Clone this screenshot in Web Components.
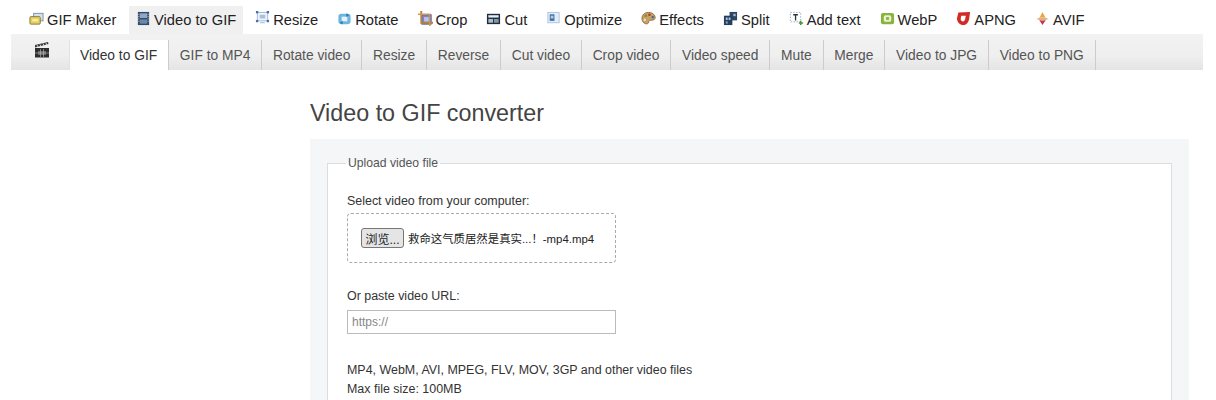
<!DOCTYPE html>
<html lang="en"><head><meta charset="utf-8"><title>Video to GIF converter</title>
<style>
html,body{margin:0;padding:0;background:#fff;height:400px;overflow:hidden}
body{font-family:"Liberation Sans",Arial,sans-serif;color:#333}
svg{display:block}
</style></head><body>
<template id="t-top"><style>
:host{display:flex;padding:6px 0 0 22px;height:34px;box-sizing:border-box;gap:5.05px;font-size:14.7px;color:#222}
</style><slot></slot></template>
<template id="t-item"><style>
:host{display:flex;align-items:center;height:28px;padding:0 7px;gap:3px;box-sizing:border-box;white-space:nowrap;padding-bottom:1px}
:host([active]){background:#f0f0f0;margin-left:.6px}
.i{width:15px;height:15px;display:block;margin-top:-3px}
</style><span class="i"><slot name="icon"></slot></span><slot></slot></template>
<template id="t-sub"><style>
:host{display:flex;margin:0 13px 0 11px;height:36px;background:linear-gradient(#f2f2f2,#efefef 60%,#e4e4e4);font-size:13.8px;color:#555}
.logo{width:58px;display:flex;justify-content:center;padding:7px 0 0 4px;box-sizing:border-box}
</style><div class="logo"><slot name="logo"></slot></div><slot></slot></template>
<template id="t-tab"><style>
:host{display:flex;align-items:center;margin-top:6px;height:30px;padding:0 10.8px;border-right:1px solid #ccc;white-space:nowrap;box-sizing:border-box}
:host([active]){background:#fff;color:#333;border-left:1px solid #e2e2e2;padding-left:10px}
</style><slot></slot></template>
<template id="t-main"><style>
:host{display:block;margin-left:310px;width:879px}
h1{font-weight:400;font-size:23.3px;line-height:29px;margin:0;padding:29px 0 11px;color:#444}
.box{background:#f5f6f7;padding:17px 17px 40px}
</style><h1><slot name="title"></slot></h1><div class="box"><slot></slot></div></template>
<template id="t-field"><style>
:host{display:block}
fieldset{margin:0;padding:21px 19px 30px;border:1px solid #ddd;background:#fff;position:relative}
legend{font-size:12.2px;color:#555;padding:0 2px;line-height:15px;margin-left:-1px}
</style><fieldset><legend><slot name="legend"></slot></legend><slot></slot></fieldset></template>
<template id="t-drop"><style>
:host{display:flex;align-items:center;box-sizing:border-box;width:269px;height:50px;border:1px dashed #aaa;border-radius:4px;padding:0 13px;margin-top:3px;font-size:11.4px;color:#222;white-space:nowrap;font-family:"Liberation Sans","Noto Sans CJK SC",sans-serif}
button{font:12px "Liberation Sans","Noto Sans CJK SC",sans-serif;width:43px;height:20px;padding:0;border:1px solid #777;border-radius:3px;background:#e5e5e5;color:#222;margin-right:4px}
</style><button type="button">浏览...</button><slot></slot></template>
<template id="t-url"><style>
:host{display:block;margin-top:5px}
input{display:block;box-sizing:border-box;width:269px;height:24px;border:1px solid #bbb;padding:0 4px;font:12px "Liberation Sans",sans-serif;background:#fff;margin:0;outline:0}
input::placeholder{color:#888;opacity:1}
</style><input type="text" placeholder="https://"></template>
<template id="t-label"><style>
:host{display:block;font-size:12.45px;line-height:18px;color:#333}
</style><slot></slot></template>

<top-nav>
<nav-item><svg slot="icon" viewBox="0 0 16 16" width="15" height="15"><rect x="5" y="2.500" width="10" height="8" fill="#d5e2ee" stroke="#7f8f9c"/><rect x="1" y="6" width="11" height="8" rx="1" fill="#e8cf5e" stroke="#85793c"/><rect x="3.500" y="8.500" width="6" height="2.500" fill="#f5ecb0"/></svg>GIF Maker</nav-item>
<nav-item active><svg slot="icon" viewBox="0 0 16 16" width="15" height="15"><rect x="2" y="1" width="12" height="14" fill="#2f4a6b"/><rect x="4" y="2.500" width="8" height="5" fill="#8fa7c4"/><rect x="4" y="9" width="8" height="4.500" fill="#6d88a8"/><path d="M3 3v10" stroke="#c8d2de" stroke-dasharray="1 1.500"/><path d="M13 3v10" stroke="#c8d2de" stroke-dasharray="1 1.500"/></svg>Video to GIF</nav-item>
<nav-item><svg slot="icon" viewBox="0 0 16 16" width="15" height="15"><rect x="2.500" y="1.500" width="11" height="9" fill="#f1f5fb" stroke="#9db5da"/><rect x="5" y="4" width="6" height="4" fill="#a9bfe0"/><path d="M5.500 12.500h5" stroke="#9db5da"/><g fill="#4d6fa8"><rect x="1" y="0" width="2.500" height="2.500"/><rect x="12.500" y="0" width="2.500" height="2.500"/><rect x="1" y="9.500" width="2.500" height="2.500"/><rect x="12.500" y="9.500" width="2.500" height="2.500"/></g></svg>Resize</nav-item>
<nav-item><svg slot="icon" viewBox="0 0 16 16" width="15" height="15"><rect x="1.500" y="3" width="13" height="11" rx="3" fill="#6db6e0"/><rect x="5" y="6" width="6" height="5" fill="#e6f2fa"/><path d="M10 2.500l3 2-3 2zM6 10.500l-3 2 3 2z" fill="#1f7db8"/></svg>Rotate</nav-item>
<nav-item><svg slot="icon" viewBox="0 0 16 16" width="15" height="15"><rect x="4" y="4" width="10" height="10" fill="#7f84c2" stroke="#4f5296"/><rect x="6.500" y="6.500" width="5" height="5" fill="#b9c3e8"/><path d="M3.500 0v12.500H16" fill="none" stroke="#b7803b" stroke-width="2"/><path d="M0 3.500h12.500V16" fill="none" stroke="#c89a55" stroke-width="1.500"/></svg>Crop</nav-item>
<nav-item><svg slot="icon" viewBox="0 0 16 16" width="15" height="15"><rect x="1" y="3" width="14" height="11" fill="#222d3a"/><rect x="2.500" y="4.500" width="11" height="2.500" fill="#e6edf4"/><rect x="2.500" y="8.500" width="5" height="4" fill="#a9bed2"/><rect x="8.500" y="8.500" width="5" height="4" fill="#7e97ae"/></svg>Cut</nav-item>
<nav-item><svg slot="icon" viewBox="0 0 16 16" width="15" height="15"><rect x="2" y="1.500" width="12" height="11" fill="#e3edf7" stroke="#a9c3de"/><rect x="4" y="3.500" width="5" height="7" fill="#3d6ea5"/><rect x="5" y="5" width="3" height="3" fill="#b4cbe3"/></svg>Optimize</nav-item>
<nav-item><svg slot="icon" viewBox="0 0 16 16" width="15" height="15"><path d="M8 1.500C3.500 1.500 1 4.500 1 8s3 6.500 6 5.500c2-.7.500-2.500 2-3.300s5 .3 6-2.200C15.700 4.500 12.500 1.500 8 1.500z" fill="#c9a063" stroke="#75572e" stroke-width=".8"/><circle cx="5" cy="5" r="1.400" fill="#7a8f3c"/><circle cx="9" cy="4" r="1.400" fill="#b33c2e"/><circle cx="12.500" cy="6.500" r="1.300" fill="#3566a0"/><circle cx="4" cy="9.500" r="1.400" fill="#e4d9c0"/></svg>Effects</nav-item>
<nav-item><svg slot="icon" viewBox="0 0 16 16" width="15" height="15"><rect x="7" y="1" width="8" height="9" fill="#2d4664"/><rect x="1" y="5" width="9" height="10" fill="#25405e"/><rect x="3" y="7" width="2" height="2.500" fill="#b9cadc"/><rect x="6" y="7" width="2" height="2.500" fill="#b9cadc"/><rect x="3" y="11" width="2" height="2.500" fill="#8aa2bb"/><rect x="11" y="3" width="2.500" height="2.500" fill="#a5bbd1"/></svg>Split</nav-item>
<nav-item><svg slot="icon" viewBox="0 0 16 16" width="15" height="15"><rect x="1.500" y="1.500" width="11" height="10" fill="#fff" stroke="#9aa7b4" stroke-dasharray="1.500 1.500"/><path d="M4.500 4h5M7 4v6" stroke="#2a3540" stroke-width="1.400" fill="none"/><path d="M12.500 10.500v4.500M10.500 12.700h4.500" stroke="#3f9a3c" stroke-width="1.600"/></svg>Add text</nav-item>
<nav-item><svg slot="icon" viewBox="0 0 16 16" width="15" height="15"><rect x="1" y="2" width="14" height="12" rx="2" fill="#8ab33d"/><rect x="4" y="4.500" width="8" height="7" rx="2" fill="#e8f2d2"/><rect x="6.500" y="6.500" width="3" height="3" fill="#8ab33d"/></svg>WebP</nav-item>
<nav-item><svg slot="icon" viewBox="0 0 16 16" width="15" height="15"><path d="M2.500 1.500l12.500-.5-1 7.500C13.400 12.500 10.500 15 7.500 15S1 12 1 8z" fill="#d22a24"/><path d="M5.500 5h5l-.7 3.500c-.4 1.700-1.200 2.700-2.400 2.700S5 10 5 8.500z" fill="#fff"/></svg>APNG</nav-item>
<nav-item><svg slot="icon" viewBox="0 0 16 16" width="15" height="15"><path d="M8 1l3 6H5z" fill="#e8a53c"/><path d="M1.500 8.500L5 7h6l3.500 1.500L8 10.500z" fill="#dfb07c"/><path d="M4.500 9.500l3.500 1 3.500-1L8 15z" fill="#c8344a"/></svg>AVIF</nav-item>
</top-nav>
<sub-nav>
<svg slot="logo" viewBox="0 0 16 18" width="16" height="18"><path d="M1 7V16.500H15V7z" fill="#2e2e2e"/><path d="M1 6.500L14.500 3 14 1 1 4z" fill="#3a3a3a"/><path d="M3 4l1 2M6 3.500l1 2M9 2.500l1 2M12 2l1 2" stroke="#ddd" stroke-width=".9"/><path d="M4 10h8v4H4z" fill="#6a6a6a"/><path d="M6.500 8v8M9.500 8v8M1 12h14" stroke="#bbb" stroke-width=".6"/></svg>
<sub-tab active>Video to GIF</sub-tab><sub-tab>GIF to MP4</sub-tab><sub-tab>Rotate video</sub-tab><sub-tab>Resize</sub-tab><sub-tab>Reverse</sub-tab><sub-tab>Cut video</sub-tab><sub-tab>Crop video</sub-tab><sub-tab>Video speed</sub-tab><sub-tab>Mute</sub-tab><sub-tab>Merge</sub-tab><sub-tab>Video to JPG</sub-tab><sub-tab>Video to PNG</sub-tab>
</sub-nav>
<main-panel>
<span slot="title">Video to GIF converter</span>
<upload-field>
<span slot="legend">Upload video file</span>
<form-label>Select video from your computer:</form-label>
<file-drop>救命这气质居然是真实...！-mp4.mp4</file-drop>
<form-label style="margin-top:24px">Or paste video URL:</form-label>
<url-input></url-input>
<form-label style="margin-top:27px;line-height:18.5px">MP4, WebM, AVI, MPEG, FLV, MOV, 3GP and other video files<br>Max file size: 100MB</form-label>
</upload-field>
</main-panel>
<script>
const reg=(n,t)=>customElements.define(n,class extends HTMLElement{constructor(){super();this.attachShadow({mode:'open'}).appendChild(document.getElementById(t).content.cloneNode(true))}});
[['top-nav','t-top'],['nav-item','t-item'],['sub-nav','t-sub'],['sub-tab','t-tab'],['main-panel','t-main'],['upload-field','t-field'],['file-drop','t-drop'],['url-input','t-url'],['form-label','t-label']].forEach(a=>reg(a[0],a[1]));
</script>
</body></html>
